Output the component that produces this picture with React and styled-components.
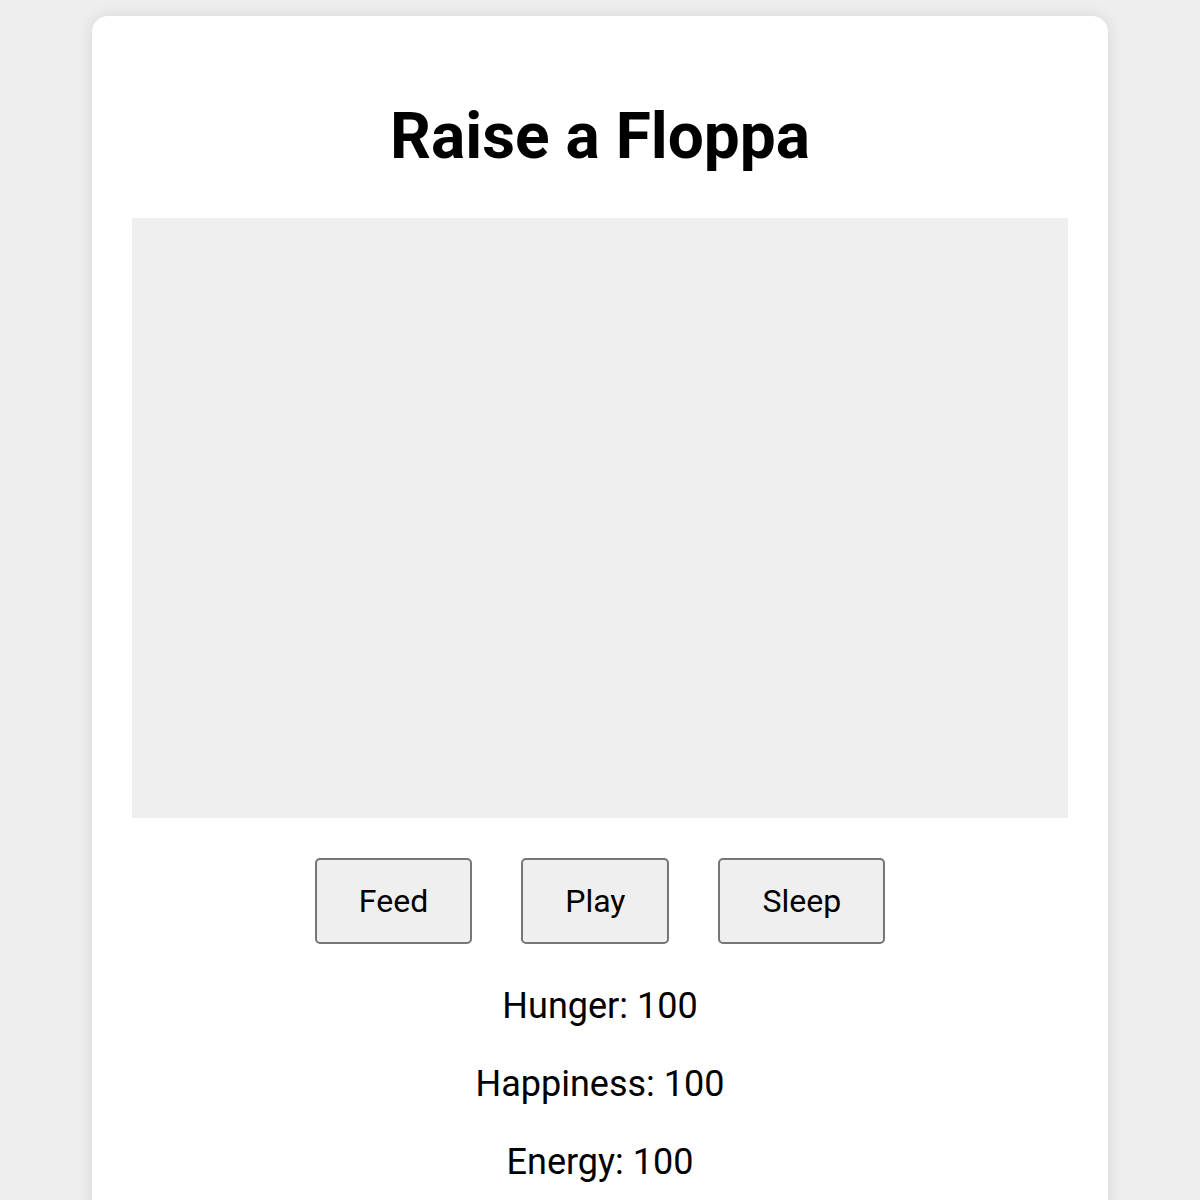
import React from "react";
import styled, { createGlobalStyle } from "styled-components";

const Global = createGlobalStyle`
  html, body {
    margin: 0;
    padding: 0;
    background: #eeeeee;
    font-family: Roboto, "Liberation Sans", Arial, sans-serif;
  }
  body {
    padding: 16px 0 0;
  }
`;

const Card = styled.main`
  width: 1016px;
  margin: 0 auto;
  box-sizing: border-box;
  background: #ffffff;
  border-radius: 16px;
  box-shadow: 0 0 16px rgba(0, 0, 0, 0.1);
  padding: 40px 40px 40px;
  text-align: center;
`;

const Title = styled.h1`
  margin: 43px 0 44px;
  font-size: 64px;
  font-weight: 700;
  line-height: 75px;
  color: #000;
`;

const Stage = styled.div`
  width: 936px;
  height: 600px;
  background: #efefef;
`;

const Actions = styled.div`
  display: flex;
  justify-content: center;
  gap: 49px;
  margin-top: 40px;
`;

const ActionButton = styled.button`
  height: 86px;
  padding: 0 42px;
  box-sizing: border-box;
  border: 2px solid #767676;
  border-radius: 5px;
  background: #efefef;
  color: #000;
  font-family: Roboto, "Liberation Sans", Arial, sans-serif;
  font-size: 32px;
  cursor: pointer;
`;

const Stats = styled.div`
  display: flex;
  flex-direction: column;
  gap: 36px;
  margin-top: 41px;
`;

const Stat = styled.p`
  margin: 0;
  font-size: 36px;
  line-height: 42px;
  color: #000;
`;

export default function App() {
  return (
    <>
      <Global />
      <Card>
        <Title>Raise a Floppa</Title>
        <Stage />
        <Actions>
          <ActionButton>Feed</ActionButton>
          <ActionButton>Play</ActionButton>
          <ActionButton>Sleep</ActionButton>
        </Actions>
        <Stats>
          <Stat>Hunger: 100</Stat>
          <Stat>Happiness: 100</Stat>
          <Stat>Energy: 100</Stat>
        </Stats>
      </Card>
    </>
  );
}
